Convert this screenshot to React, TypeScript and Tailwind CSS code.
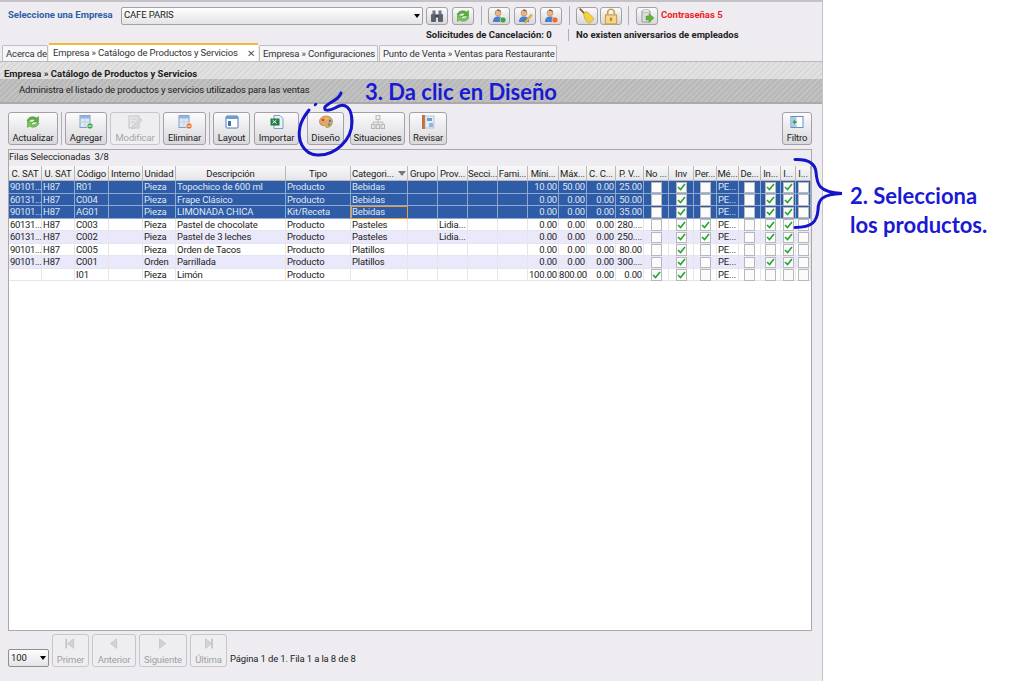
import React from "react";

const cols = "grid grid-cols-[33px_33px_34px_34px_33px_110px_65px_57px_30px_30px_30px_30px_31px_28px_29px_28px_25px_25px_23px_22px_22px_20px_15px_15px]";

const Svg = ({ children, s = 16, faded = false }: { children: React.ReactNode; s?: number; faded?: boolean }) => (
  <svg width={s} height={s} viewBox="0 0 16 16" className={faded ? "opacity-40" : ""}>{children}</svg>
);

const Refresh = ({ s = 16 }: { s?: number }) => (
  <Svg s={s}>
    <path d="M2 7C3 3 8 1.500 11.500 4L13.500 2.500V8H8L10 6C8 4.500 5 5 4 7.500Z" fill="#5bb03c" stroke="#3b8a2a" strokeWidth=".5" />
    <path d="M14 9C13 13 8 14.500 4.500 12L2.500 13.500V8H8L6 10C8 11.500 11 11 12 8.500Z" fill="#7cc855" stroke="#3b8a2a" strokeWidth=".5" />
  </Svg>
);
const TableIcon = ({ badge }: { badge?: string }) => (
  <Svg>
    <rect x="2" y="1.500" width="10" height="12" fill="#dfe9f5" stroke="#7fa0c8" />
    <rect x="2" y="1.500" width="10" height="3" fill="#8fb4de" />
    <path d="M7 5v8M2 8h10" stroke="#b5c8e0" strokeWidth=".7" />
    {badge && <circle cx="12" cy="12" r="3" fill={badge} stroke="#fff" strokeWidth=".5" />}
    {badge && <path d="M10.300 12h3.400" stroke="#fff" strokeWidth="1" />}
  </Svg>
);
const EditIcon = () => (
  <Svg faded>
    <rect x="2" y="2" width="10" height="12" fill="#ddd" stroke="#888" />
    <path d="M4 5h6M4 8h4" stroke="#999" />
    <path d="M6 12L13 4l2 2-7 8-3 1z" fill="#bbb" stroke="#777" strokeWidth=".6" />
  </Svg>
);
const LayoutIcon = () => (
  <Svg>
    <rect x="2" y="2" width="12" height="12" rx="1" fill="#fff" stroke="#4f7fb8" />
    <rect x="2" y="2" width="12" height="3" fill="#6d9bd2" />
    <rect x="4" y="7" width="3" height="5" fill="#3f73b5" />
  </Svg>
);
const ExcelIcon = () => (
  <Svg>
    <path d="M5 1.500h6l3 3v10H5z" fill="#e9f1f7" stroke="#7fa0bd" />
    <rect x="1.500" y="4.500" width="9" height="7" fill="#1f7a44" />
    <path d="M3.500 6l4 3.500M7.500 6l-4 3.500" stroke="#fff" strokeWidth="1" />
  </Svg>
);
const PaletteIcon = () => (
  <Svg>
    <path d="M8 2C4 2 1.500 4.500 1.500 8c0 3 3 4 4.500 3.500 1.500-.5 1 2 3 2 3.500 0 5.500-3 5.500-6C14.500 4 11.500 2 8 2Z" fill="#e0a868" stroke="#a8743c" strokeWidth=".6" />
    <circle cx="5" cy="6" r="1.300" fill="#d8402f" />
    <circle cx="8.500" cy="4.500" r="1.300" fill="#f0c52c" />
    <circle cx="12" cy="7" r="1.300" fill="#3d7fd0" />
    <circle cx="11" cy="10.500" r="1.300" fill="#4aa84a" />
  </Svg>
);
const OrgIcon = () => (
  <Svg faded>
    <rect x="6" y="1.500" width="4" height="4" fill="#ddd" stroke="#666" />
    <rect x="1.500" y="10.500" width="3.500" height="4" fill="#ddd" stroke="#666" />
    <rect x="6.200" y="10.500" width="3.500" height="4" fill="#ddd" stroke="#666" />
    <rect x="11" y="10.500" width="3.500" height="4" fill="#ddd" stroke="#666" />
    <path d="M8 5.500V10.500M3.200 10.500V8H12.800V10.500" stroke="#666" fill="none" />
  </Svg>
);
const BookIcon = () => (
  <Svg>
    <rect x="2" y="1" width="3" height="14" fill="#c4703a" />
    <rect x="5" y="2" width="9" height="12" fill="#e5ebf3" stroke="#9ab" strokeWidth=".6" />
    <rect x="7" y="4" width="5" height="3" fill="#6d9bd2" />
    <rect x="9" y="9" width="4" height="4" fill="#8fb4de" />
  </Svg>
);
const FilterIcon = () => (
  <Svg>
    <rect x="2" y="2.500" width="12" height="11" fill="#fff" stroke="#5f8fc4" />
    <rect x="2.500" y="3" width="5" height="10" fill="#a9cbe8" />
    <path d="M3.500 8l2.500-2.500v1.500h1.500v2H6v1.500z" fill="#3aa63a" />
  </Svg>
);
const Binoculars = () => (
  <Svg>
    <rect x="2" y="6" width="5" height="8" rx="1" fill="#59616e" />
    <rect x="9" y="6" width="5" height="8" rx="1" fill="#59616e" />
    <rect x="3.500" y="2.500" width="3" height="4" fill="#6d7684" />
    <rect x="9.500" y="2.500" width="3" height="4" fill="#6d7684" />
    <rect x="6.500" y="6.500" width="3" height="3" fill="#3d4450" />
  </Svg>
);
const UserIcon = ({ badge, pencil }: { badge?: string; pencil?: boolean }) => (
  <Svg>
    <circle cx="7" cy="5" r="3" fill="#e8b48a" stroke="#a8764c" strokeWidth=".5" />
    <path d="M6 2.500C5 1.500 9 .8 10 3.500L7 3z" fill="#8a5a2c" />
    <path d="M2 14c0-4 2-5.500 5-5.500s5 1.500 5 5.500z" fill="#4d7fc4" />
    {badge && <circle cx="12" cy="12" r="3" fill={badge} stroke="#fff" strokeWidth=".5" />}
    {pencil && <path d="M8 13l6-7 1.500 1.500-6 7-2 .5z" fill="#f0b840" stroke="#b58320" strokeWidth=".4" />}
  </Svg>
);
const Broom = () => (
  <Svg s={18}>
    <path d="M1.500 1.500l5 5" stroke="#8a5a20" strokeWidth="1.600" />
    <path d="M5 5.500l3-1.500 6 6c-1 2-2 3.500-3.500 4.500C8 14 5 10 5 5.500Z" fill="#f2d23c" stroke="#b59420" strokeWidth=".5" />
  </Svg>
);
const Lock = () => (
  <Svg s={18}>
    <path d="M5 7V5a3 3 0 016 0v2" fill="none" stroke="#c9a04c" strokeWidth="1.500" />
    <rect x="3" y="7" width="10" height="8" fill="#f5d68a" stroke="#c9a04c" />
    <rect x="7" y="9.500" width="2" height="3" fill="#b58a38" />
  </Svg>
);
const DbArrow = () => (
  <Svg>
    <path d="M3 3h8v11H3z" fill="#ddd" stroke="#999" />
    <ellipse cx="7" cy="3" rx="4" ry="1.500" fill="#eee" stroke="#999" strokeWidth=".6" />
    <path d="M7 8h3V5.500L15 10l-5 4.500V12H7z" fill="#62b13f" stroke="#3d8a28" strokeWidth=".4" />
  </Svg>
);
const Nav = ({ dir, bar }: { dir: "l" | "r"; bar?: boolean }) => (
  <Svg s={14} faded>
    {dir === "l" ? <path d="M11 2v11L4 7.500z" fill="#aaa" stroke="#666" strokeWidth=".6" /> : <path d="M4 2v11l7-5.500z" fill="#aaa" stroke="#666" strokeWidth=".6" />}
    {bar && <rect x={dir === "l" ? 1.500 : 10.500} y="2" width="2" height="11" fill="#888" />}
  </Svg>
);

const boxBtn = "border border-[#a3a1a5] rounded-[3px] bg-gradient-to-b from-[#fbfbfc] to-[#d7d6da] flex items-center justify-center";

const TopBtn = ({ children, w = "w-[22px]" }: { children: React.ReactNode; w?: string }) => (
  <div className={`${boxBtn} ${w} h-[18px]`}>{children}</div>
);

const Sep = ({ h = "h-[19px]" }: { h?: string }) => <div className={`w-px bg-[#b0aeb2] ${h}`} />;

const ToolBtn = ({ icon, label, w, disabled }: { icon: React.ReactNode; label: string; w: string; disabled?: boolean }) => (
  <div className={`${w} h-[33px] border rounded-[3px] flex flex-col items-center justify-between pt-[1px] ${disabled ? "border-[#c8c6ca] bg-[#eeedf0] text-[#a5a5a8]" : "border-[#a3a1a5] bg-gradient-to-b from-[#fbfbfc] to-[#d9d8dc] text-[#222]"}`}>
    <div className="h-[16px] flex items-center">{icon}</div>
    <span className="text-[9.500px] leading-[12px] whitespace-nowrap">{label}</span>
  </div>
);

const PageBtn = ({ icon, label, w }: { icon: React.ReactNode; label: string; w: string }) => (
  <div className={`${w} h-[33px] border border-[#c8c6ca] rounded-[3px] bg-[#eeedf0] text-[#a0a0a4] flex flex-col items-center justify-between pt-[2px]`}>
    <div className="h-[14px]">{icon}</div>
    <span className="text-[9.500px] leading-[12px]">{label}</span>
  </div>
);

const Tab = ({ label, w, active }: { label: string; w: string; active?: boolean }) => (
  <div className={active
    ? `${w} h-[18px] bg-white border-t-2 border-[#f5b83d] flex items-center justify-between pl-[4px] pr-[3px] pt-[1px] text-[#333]`
    : `${w} h-[16px] bg-[#f6f5f7] border border-b-0 border-[#bdbcc0] rounded-t-[2px] flex items-center px-[3px] pt-[1px] text-[#333]`}>
    <span className="text-[9.500px] whitespace-nowrap">{label}</span>
    {active && <span className="text-[10px] leading-none text-[#555]">✕</span>}
  </div>
);

const heads = ["C. SAT", "U. SAT", "Código", "Interno", "Unidad", "Descripción", "Tipo", "Categori...", "Grupo", "Prov...", "Secci...", "Fami...", "Míni...", "Máx...", "C. C...", "P. V...", "No ...", "Inv", "Per...", "Mé...", "De...", "In...", "I...", "I..."];

type Row = { a: string; b: string; c: string; u: string; d: string; t: string; k: string; p: string; n: string[]; x: boolean[]; sel?: boolean; alt?: boolean; focus?: boolean };
const rows: Row[] = [
  { a: "90101...", b: "H87", c: "R01", u: "Pieza", d: "Topochico de 600 ml", t: "Producto", k: "Bebidas", p: "", n: ["10.00", "50.00", "0.00", "25.00"], x: [false, true, false, false, true, true, false], sel: true },
  { a: "60131...", b: "H87", c: "C004", u: "Pieza", d: "Frape Clásico", t: "Producto", k: "Bebidas", p: "", n: ["0.00", "0.00", "0.00", "50.00"], x: [false, true, false, false, true, true, false], sel: true },
  { a: "90101...", b: "H87", c: "AG01", u: "Pieza", d: "LIMONADA CHICA", t: "Kit/Receta", k: "Bebidas", p: "", n: ["0.00", "0.00", "0.00", "35.00"], x: [false, true, false, false, true, true, false], sel: true, focus: true },
  { a: "60131...", b: "H87", c: "C003", u: "Pieza", d: "Pastel de chocolate", t: "Producto", k: "Pasteles", p: "Lidia...", n: ["0.00", "0.00", "0.00", "280...."], x: [false, true, true, false, true, true, false] },
  { a: "60131...", b: "H87", c: "C002", u: "Pieza", d: "Pastel de 3 leches", t: "Producto", k: "Pasteles", p: "Lidia...", n: ["0.00", "0.00", "0.00", "250...."], x: [false, true, true, false, true, true, false], alt: true },
  { a: "90101...", b: "H87", c: "C005", u: "Pieza", d: "Orden de Tacos", t: "Producto", k: "Platillos", p: "", n: ["0.00", "0.00", "0.00", "80.00"], x: [false, true, false, false, false, true, false] },
  { a: "90101...", b: "H87", c: "C001", u: "Orden", d: "Parrillada", t: "Producto", k: "Platillos", p: "", n: ["0.00", "0.00", "0.00", "300...."], x: [false, true, false, false, true, true, false], alt: true },
  { a: "", b: "", c: "I01", u: "Pieza", d: "Limón", t: "Producto", k: "", p: "", n: ["100.00", "800.00", "0.00", "0.00"], x: [true, true, false, false, false, false, false] },
];

const Check = ({ on }: { on: boolean }) => (
  <div className="w-[11px] h-[11.500px] bg-[#fbfbfb] border border-[#b8b8bc] flex items-center justify-center">
    {on && (
      <svg width="9" height="8" viewBox="0 0 9 8">
        <path d="M1 4l2.500 2.500L8 1" fill="none" stroke="#22a52f" strokeWidth="1.600" />
      </svg>
    )}
  </div>
);

const TableRow = ({ r }: { r: Row }) => {
  const line = r.sel ? "border-[#8fa8d0]" : "border-[#e6e6ea]";
  const cell = `border-r ${line} pl-[1px] whitespace-nowrap`;
  const num = `border-r ${line} pr-[1px] text-right whitespace-nowrap tracking-[-0.2px]`;
  const box = `border-r ${line} flex items-center justify-center`;
  const bg = r.sel ? "bg-[#2f5ca6] text-[#dfe6f5]" : r.alt ? "bg-[#e9e9fb] text-[#222]" : "bg-white text-[#222]";
  return (
    <div className={`${cols} h-[12.500px] leading-[12.500px] text-[9.500px] tracking-[-0.14px] border-b ${r.sel ? "border-[#8fa8d0]" : "border-[#e6e6ea]"} ${bg}`}>
      <div className={`${cell} tracking-[-0.35px]`}>{r.a}</div>
      <div className={cell}>{r.b}</div>
      <div className={cell}>{r.c}</div>
      <div className={cell}></div>
      <div className={cell}>{r.u}</div>
      <div className={cell}>{r.d}</div>
      <div className={cell}>{r.t}</div>
      <div className={r.focus ? "relative z-10 outline outline-1 outline-[#f0a030] -outline-offset-1 pl-[1px] whitespace-nowrap" : cell}>{r.k}</div>
      <div className={cell}></div>
      <div className={cell}>{r.p}</div>
      <div className={cell}></div>
      <div className={cell}></div>
      {r.n.map((v, i) => <div key={i} className={num}>{v}</div>)}
      <div className={box}><Check on={r.x[0]} /></div>
      <div className={box}><Check on={r.x[1]} /></div>
      <div className={box}><Check on={r.x[2]} /></div>
      <div className={cell}>PE...</div>
      <div className={box}><Check on={r.x[3]} /></div>
      <div className={box}><Check on={r.x[4]} /></div>
      <div className={box}><Check on={r.x[5]} /></div>
      <div className={box}><Check on={r.x[6]} /></div>
    </div>
  );
};

export default function App() {
  return (
    <div className="relative w-[1010px] h-[681px] bg-white overflow-hidden font-['Roboto','Liberation_Sans',sans-serif] text-[#222]">
      <div className="w-[823px] h-[681px] bg-[#eeecf1] border-t-2 border-r border-[#c4c2c6] flex flex-col tracking-[-0.14px]">
        {/* top row */}
        <div className="flex items-center h-[19px] mt-[4px] text-[9.500px]">
          <span className="ml-[8px] w-[113px] font-bold text-[#2f5da6] tracking-normal whitespace-nowrap">Seleccione una Empresa</span>
          <div className="w-[302px] h-[18px] border border-[#a3a1a5] rounded-[2px] bg-gradient-to-b from-white to-[#e4e3e6] flex items-center justify-between pl-[2px] pr-[2px]">
            <span>CAFE PARIS</span>
            <span className="w-0 h-0 border-l-[3.500px] border-r-[3.500px] border-t-[4px] border-l-transparent border-r-transparent border-t-black" />
          </div>
          <div className="ml-[3px] flex items-center">
            <TopBtn><Binoculars /></TopBtn>
            <div className="w-[4px]" />
            <TopBtn><Refresh /></TopBtn>
            <div className="w-[7px]" /><Sep /><div className="w-[6px]" />
            <TopBtn><UserIcon badge="#3ea548" /></TopBtn>
            <div className="w-[4px]" />
            <TopBtn><UserIcon pencil /></TopBtn>
            <div className="w-[4px]" />
            <TopBtn><UserIcon badge="#e8702c" /></TopBtn>
            <div className="w-[7px]" /><Sep /><div className="w-[6px]" />
            <TopBtn><Broom /></TopBtn>
            <div className="w-[2px]" />
            <TopBtn><Lock /></TopBtn>
            <div className="w-[6px]" /><Sep /><div className="w-[7px]" />
            <TopBtn><DbArrow /></TopBtn>
          </div>
          <span className="ml-[3px] font-bold text-[#ee1c25] tracking-normal whitespace-nowrap">Contraseñas 5</span>
        </div>
        {/* second row */}
        <div className="flex items-center h-[12px] mt-[4px] text-[9.500px] font-bold tracking-normal">
          <span className="ml-[426px] w-[142px] whitespace-nowrap">Solicitudes de Cancelación: 0</span>
          <Sep h="h-[12px]" />
          <span className="ml-[7px] whitespace-nowrap">No existen aniversarios de empleados</span>
        </div>
        {/* tabs */}
        <div className="flex items-end h-[18px] mt-[3px] pl-[2px] gap-[1px] border-b border-[#b9b8bc]">
          <Tab label="Acerca de" w="w-[46px]" />
          <Tab label="Empresa » Catálogo de Productos y Servicios" w="w-[209px]" active />
          <Tab label="Empresa » Configuraciones" w="w-[119px]" />
          <Tab label="Punto de Venta » Ventas para Restaurante" w="w-[178px]" />
        </div>
        {/* banner */}
        <div className="h-[42px] flex flex-col border-b-2 border-[#aaa9ad] text-[9.500px]">
          <div className="h-[17px] bg-[repeating-linear-gradient(135deg,#d9d9d9_0px,#d9d9d9_2px,#e2e2e2_2px,#e2e2e2_4px)] pl-[4px] pt-[3px] font-bold tracking-normal leading-[17px] whitespace-nowrap">
            Empresa » Catálogo de Productos y Servicios
          </div>
          <div className="flex-1 bg-[repeating-linear-gradient(135deg,#b8b8b8_0px,#b8b8b8_2px,#c2c2c2_2px,#c2c2c2_4px)] pl-[19px] leading-[22px] whitespace-nowrap">
            Administra el listado de productos y servicios utilizados para las ventas
          </div>
        </div>
        {/* toolbar */}
        <div className="flex items-center h-[33px] mt-[8px] pl-[8px] pr-[10px]">
          <ToolBtn icon={<Refresh />} label="Actualizar" w="w-[50px]" />
          <div className="w-[3px]" /><Sep h="h-[33px]" /><div className="w-[3px]" />
          <ToolBtn icon={<TableIcon badge="#3ea548" />} label="Agregar" w="w-[42px]" />
          <div className="w-[3px]" />
          <ToolBtn icon={<EditIcon />} label="Modificar" w="w-[50px]" disabled />
          <div className="w-[3px]" />
          <ToolBtn icon={<TableIcon badge="#e8702c" />} label="Eliminar" w="w-[43px]" />
          <div className="w-[3px]" /><Sep h="h-[33px]" /><div className="w-[3px]" />
          <ToolBtn icon={<LayoutIcon />} label="Layout" w="w-[37px]" />
          <div className="w-[4px]" />
          <ToolBtn icon={<ExcelIcon />} label="Importar" w="w-[45px]" />
          <div className="w-[8px]" />
          <ToolBtn icon={<PaletteIcon />} label="Diseño" w="w-[37px]" />
          <div className="w-[6px]" />
          <ToolBtn icon={<OrgIcon />} label="Situaciones" w="w-[55px]" />
          <div className="w-[4px]" />
          <ToolBtn icon={<BookIcon />} label="Revisar" w="w-[38px]" />
          <div className="flex-1" />
          <ToolBtn icon={<FilterIcon />} label="Filtro" w="w-[30px]" />
        </div>
        {/* grid panel */}
        <div className="ml-[8px] mt-[4px] w-[804px] h-[482px] border border-[#a9a8ac] bg-white flex flex-col">
          <div className="h-[16px] bg-[#eeecf1] text-[9.500px] leading-[14px] whitespace-nowrap">Filas Seleccionadas&nbsp; 3/8</div>
          <div className={`${cols} h-[15px] bg-[#eeecf1] text-[9.500px] leading-[15px]`}>
            {heads.map((h, i) => (
              <div key={i} className={`relative border-r border-b border-[#b8b7bb] bg-gradient-to-b from-[#f8f8f9] to-[#e6e5e8] whitespace-nowrap overflow-hidden ${i === 7 ? "text-left pl-[1px]" : "text-center"}`}>
                {h}
                {i === 7 && <span className="absolute right-[1px] top-[5px] w-0 h-0 border-l-[4px] border-r-[4px] border-t-[5px] border-l-transparent border-r-transparent border-t-[#777]" />}
              </div>
            ))}
          </div>
          {rows.map((r, i) => <TableRow key={i} r={r} />)}
        </div>
        {/* pager */}
        <div className="flex items-end h-[33px] mt-[3px] pl-[8px] text-[9.500px]">
          <div className="w-[41px] h-[18px] border border-[#8f8e92] rounded-[2px] bg-gradient-to-b from-white to-[#e4e3e6] flex items-center justify-between px-[2px] mr-[3px]">
            <span>100</span>
            <span className="w-0 h-0 border-l-[3.500px] border-r-[3.500px] border-t-[4px] border-l-transparent border-r-transparent border-t-black" />
          </div>
          <PageBtn icon={<Nav dir="l" bar />} label="Primer" w="w-[37px]" />
          <div className="w-[3px]" />
          <PageBtn icon={<Nav dir="l" />} label="Anterior" w="w-[44px]" />
          <div className="w-[3px]" />
          <PageBtn icon={<Nav dir="r" />} label="Siguiente" w="w-[48px]" />
          <div className="w-[3px]" />
          <PageBtn icon={<Nav dir="r" bar />} label="Última" w="w-[37px]" />
          <span className="ml-[3px] mb-[1px] whitespace-nowrap">Página 1 de 1. Fila 1 a la 8 de 8</span>
        </div>
      </div>

      {/* annotations */}
      <span className="absolute left-[365px] top-[78px] font-['Lato',sans-serif] font-bold text-[22px] leading-[28px] text-[#1a1ad2] whitespace-nowrap">3. Da clic en Diseño</span>
      <svg className="absolute left-0 top-0" width="1010" height="681" viewBox="0 0 1010 681" fill="none">
        <path d="M341 93C339 100 328 103 325 107C323 111 329 111 335 108C345 101 352 108 352 122C352 140 335 156 317 155C303 154 297 140 300 127C301 122 305 115 309 110" stroke="#1414c8" strokeWidth="3" strokeLinecap="round" />
        <path d="M315 105l1-1" stroke="#1414c8" strokeWidth="2.500" strokeLinecap="round" />
        <path d="M795 159.500C808 159 815 163 816 172C817 184 818 192 842 193.500C822 194 818 200 818 210C817 222 812 227 795 227.500" stroke="#1414c8" strokeWidth="3" strokeLinecap="round" />
      </svg>
      <div className="absolute left-[850px] top-[181px] font-['Lato',sans-serif] font-bold text-[22px] leading-[29px] text-[#1a1ad2] whitespace-nowrap">
        <div>2. Selecciona</div>
        <div>los productos.</div>
      </div>
    </div>
  );
}
